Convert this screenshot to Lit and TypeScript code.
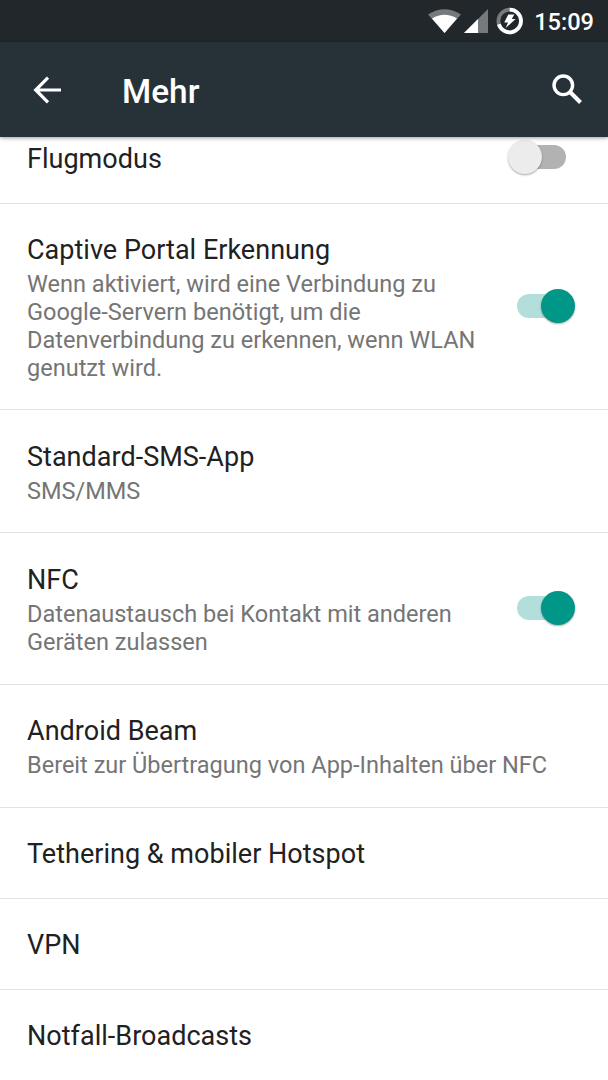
import { LitElement, html, css, svg, nothing } from "lit";
import { customElement, property } from "lit/decorators.js";
import { classMap } from "lit/directives/class-map.js";

interface Entry {
  title: string;
  lines?: string[];
  toggle?: "on" | "off";
  kind?: string;
}

const ENTRIES: Entry[] = [
  { title: "Flugmodus", toggle: "off", kind: "first" },
  {
    title: "Captive Portal Erkennung",
    lines: [
      "Wenn aktiviert, wird eine Verbindung zu",
      "Google-Servern benötigt, um die",
      "Datenverbindung zu erkennen, wenn WLAN",
      "genutzt wird.",
    ],
    toggle: "on",
    kind: "four",
  },
  { title: "Standard-SMS-App", lines: ["SMS/MMS"], kind: "one" },
  {
    title: "NFC",
    lines: ["Datenaustausch bei Kontakt mit anderen", "Geräten zulassen"],
    toggle: "on",
    kind: "two",
  },
  { title: "Android Beam", lines: ["Bereit zur Übertragung von App-Inhalten über NFC"], kind: "one" },
  { title: "Tethering & mobiler Hotspot", kind: "plain" },
  { title: "VPN", kind: "plain" },
  { title: "Notfall-Broadcasts", kind: "plain" },
];

@customElement("toggle-switch")
export class ToggleSwitch extends LitElement {
  @property({ type: Boolean }) on = false;

  static styles = css`
    :host { display: block; }
    .track {
      display: flex;
      align-items: center;
      box-sizing: border-box;
      width: 49px;
      height: 24px;
      border-radius: 12px;
      background: #b2b2b2;
    }
    .thumb {
      flex: none;
      width: 34px;
      height: 34px;
      border-radius: 50%;
      margin-left: -9px;
      background: #ececec;
      box-shadow: 0 1px 2px rgba(0, 0, 0, 0.35);
    }
    .track.on { background: #b2dfdb; justify-content: flex-end; }
    .track.on .thumb { background: #009688; margin: 0 -9px 0 0; }
  `;

  render() {
    return html`<div class=${classMap({ track: true, on: this.on })}><div class="thumb"></div></div>`;
  }
}

@customElement("app-root")
export class AppRoot extends LitElement {
  static styles = css`
    :host {
      display: flex;
      flex-direction: column;
      width: 608px;
      height: 1080px;
      overflow: hidden;
      background: #fff;
      font-family: Roboto, sans-serif;
      color: #212121;
    }
    .status {
      flex: none;
      height: 42px;
      box-sizing: border-box;
      background: #21272b;
      display: flex;
      align-items: center;
      justify-content: flex-end;
      padding-right: 14px;
      color: #fff;
    }
    .status svg { display: block; flex: none; }
    .clock {
      font-size: 23.6px;
      font-weight: 500;
      line-height: 28px;
      margin: 2px 0 0 10px;
      white-space: nowrap;
    }
    .bar {
      flex: none;
      height: 95px;
      box-sizing: border-box;
      background: #263238;
      display: flex;
      align-items: center;
      padding: 0 25px 0 33px;
      color: #fff;
      box-shadow: 0 1px 4px rgba(0, 0, 0, 0.4);
      z-index: 1;
    }
    .bar svg { display: block; flex: none; }
    .heading {
      flex: 1;
      margin: 5px 0 0 60px;
      font-size: 33.4px;
      line-height: 40px;
      font-weight: 500;
    }
    .list { flex: 1; min-height: 0; overflow: hidden; }
    .row {
      box-sizing: border-box;
      display: flex;
      align-items: center;
      border-bottom: 1px solid #e3e3e3;
      padding: 0 42px 0 27px;
    }
    .row:last-child { border-bottom: 0; }
    .row.one { height: 123.4px; }
    .row.two { height: 151.1px; }
    .row.four { height: 206.1px; }
    .row.plain { height: 91px; }
    .row.first { height: 67px; }
    .text {
      flex: 1;
      align-self: flex-start;
      white-space: nowrap;
      padding-top: 30.45px;
    }
    .plain .text { padding-top: 30px; }
    .first .text { padding-top: 6px; }
    toggle-switch { margin-bottom: 1px; }
    .first toggle-switch { margin-bottom: 26px; }
    .title { font-size: 27px; line-height: 32px; letter-spacing: 0.02px; }
    .summary {
      margin-top: 4px;
      font-size: 23.54px;
      line-height: 28px;
      color: #757575;
    }
  `;

  private row(e: Entry) {
    return html`
      <div class="row ${e.kind ?? ""}">
        <div class="text">
          <div class="title">${e.title}</div>
          ${e.lines ? html`<div class="summary">${e.lines.map((l) => html`<div>${l}</div>`)}</div>` : nothing}
        </div>
        ${e.toggle ? html`<toggle-switch ?on=${e.toggle === "on"}></toggle-switch>` : nothing}
      </div>
    `;
  }

  private statusIcons() {
    return svg`
      <svg width="96" height="42" viewBox="428 0 96 42">
        <path d="M428 14.500Q444.500 4 461 14.500L444.500 33Z" fill="#767a7c"/>
        <path d="M432 18.500Q444.500 11 457 18.500L444.500 33Z" fill="#fff"/>
        <path d="M488 9V33H464Z" fill="#767a7c"/>
        <path d="M478 19V33H464Z" fill="#fff"/>
        <circle cx="509.700" cy="21" r="11.300" fill="none" stroke="#767a7c" stroke-width="3.800"/>
        <path d="M509.700 9.700A11.300 11.300 0 1 1 498.900 24.300" fill="none" stroke="#fff" stroke-width="3.800"/>
        <path d="M508.300 14.500H514.300L511.800 19H515.600L505.700 28L508 22.400H504.200Z" fill="#fff"/>
      </svg>
    `;
  }

  render() {
    return html`
      <div class="status">
        ${this.statusIcons()}
        <div class="clock">15:09</div>
      </div>
      <div class="bar">
        <svg width="29" height="28" viewBox="0 0 29 28">
          <path d="M15 1.700L2.700 14L15 26.300M2.700 14H28" fill="none" stroke="#fff" stroke-width="3.200"/>
        </svg>
        <div class="heading">Mehr</div>
        <svg width="31" height="31" viewBox="0 0 31 31">
          <circle cx="11.300" cy="11.300" r="9.300" fill="none" stroke="#fff" stroke-width="3.400"/>
          <path d="M18 18L28.500 28.500" fill="none" stroke="#fff" stroke-width="4"/>
        </svg>
      </div>
      <div class="list">${ENTRIES.map((e) => this.row(e))}</div>
    `;
  }
}
